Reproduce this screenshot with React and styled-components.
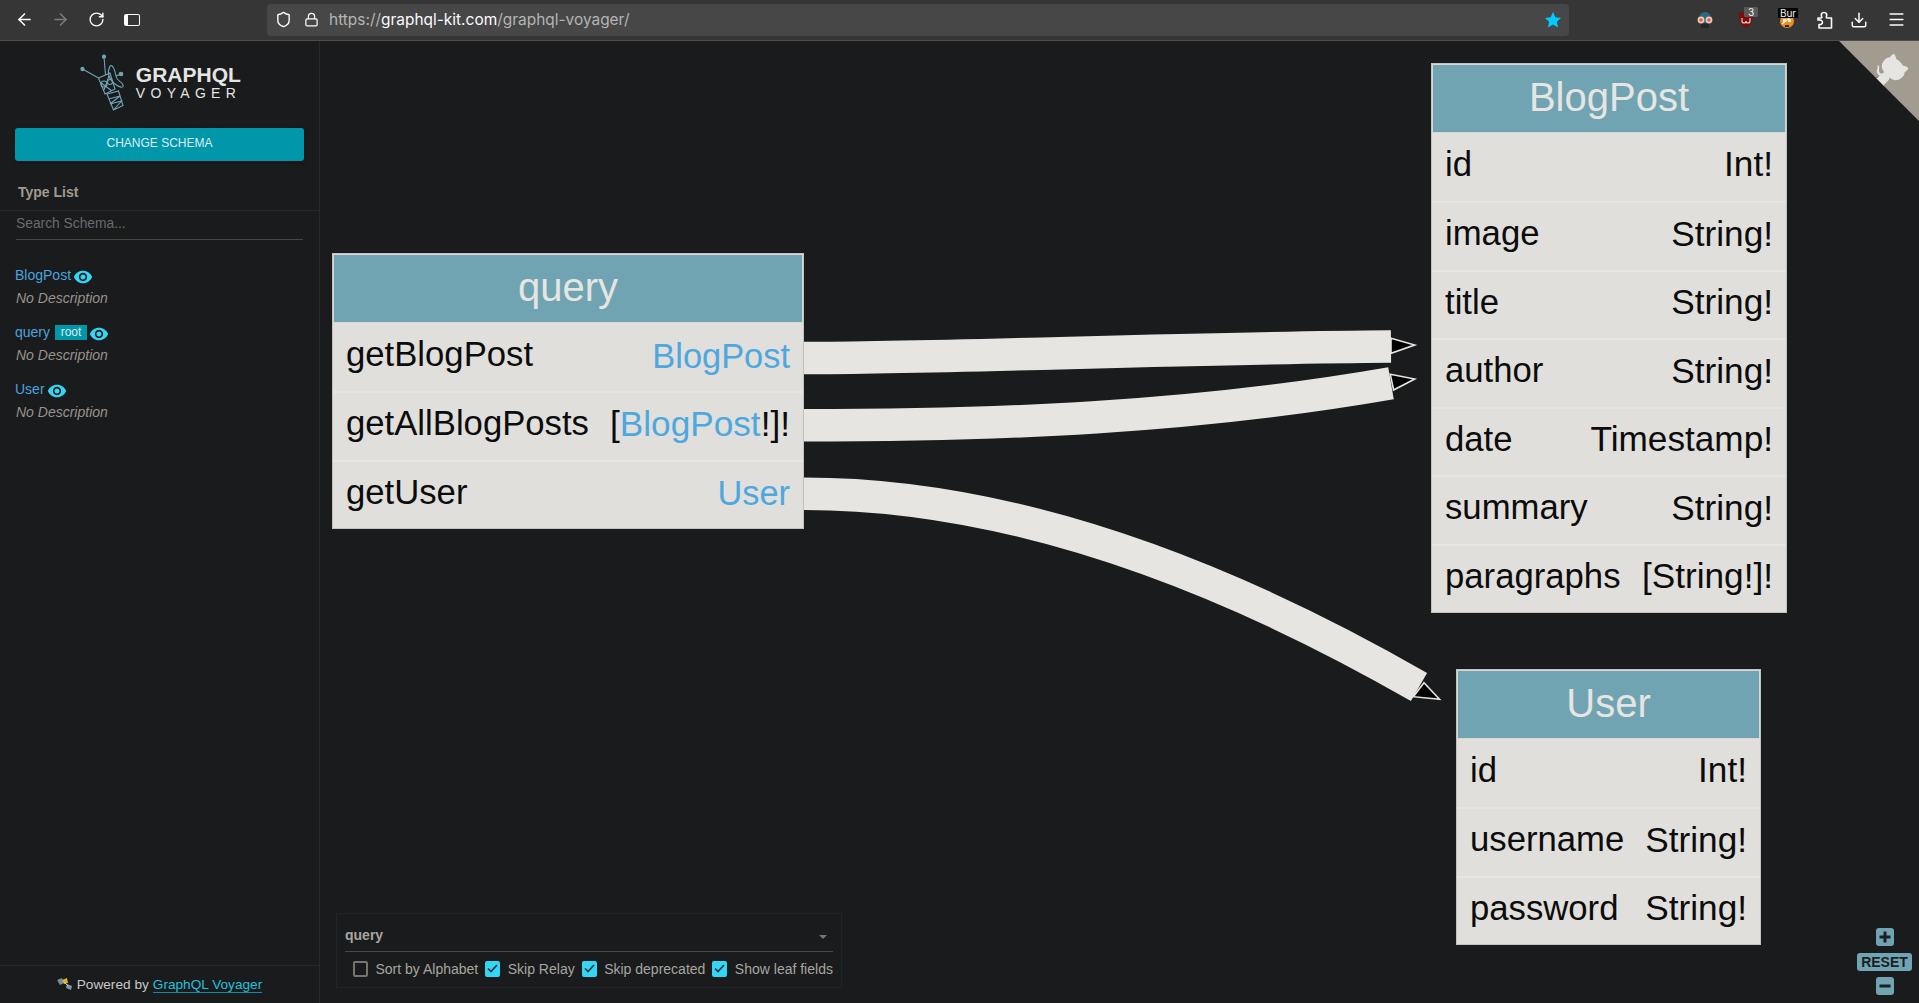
import React from "react";
import styled, { createGlobalStyle } from "styled-components";
import { ArrowLeft, ArrowRight, RotateCw, Shield, Lock, Download, Menu } from "lucide-react";

const Global = createGlobalStyle`
  html, body { margin: 0; height: 100%; background: #191b1d; }
  * { box-sizing: border-box; }
  body { font-family: "Liberation Sans", Arial, sans-serif; overflow: hidden; }
`;

const Page = styled.div`
  display: flex;
  flex-direction: column;
  width: 100vw;
  height: 100vh;
`;

// browser chrome
const TopBar = styled.div`
  flex: 0 0 41px;
  display: flex;
  align-items: center;
  background: #363636;
  border-bottom: 1px solid #4d4d4d;
  padding-bottom: 1px;
`;
const NavButtons = styled.div`
  flex: 0 0 267px;
  display: flex;
  align-items: center;
  gap: 16px;
  padding-left: 14px;
  color: #fbfbfe;
`;
const NavIcon = styled.span`
  display: flex;
  width: 20px;
  height: 20px;
  align-items: center;
  justify-content: center;
  color: ${p => (p.$off ? "#7c7c7c" : "#fbfbfe")};
`;
const SideToggle = styled.span`
  flex: 0 0 16px;
  height: 12px;
  border: 1.5px solid #fbfbfe;
  border-left-width: 4px;
  border-radius: 2px;
`;
const UrlBar = styled.div`
  flex: 0 0 1302px;
  height: 32px;
  display: flex;
  align-items: center;
  background: #474747;
  border-radius: 4px;
  padding: 0 7px 0 8px;
  color: #fbfbfe;
`;
const LockIcon = styled(Lock)`
  margin-left: 12px;
`;
const UrlText = styled.div`
  flex: 1;
  margin-left: 10px;
  font: 15.45px Inter, "Noto Sans", sans-serif;
  color: #b4b4b4;
  b { font-weight: 400; color: #fbfbfe; }
`;
const ExtIcons = styled.div`
  flex: 1;
  display: flex;
  align-items: center;
  padding-left: 115.5px;
  color: #fbfbfe;
`;
const Ext = styled.span`
  position: relative;
  flex: 0 0 ${p => p.$w}px;
  display: flex;
  height: 20px;
  align-items: center;
  justify-content: center;
`;
const Badge = styled.span`
  position: absolute;
  top: ${p => p.$top}px;
  left: ${p => p.$left}px;
  width: ${p => p.$w}px;
  height: 10px;
  background: ${p => p.$bg};
  color: #f4f4f4;
  border-radius: 1px;
  font: 10px/10px Inter, sans-serif;
  text-align: center;
  white-space: nowrap;
`;

// sidebar
const Main = styled.div`
  flex: 1;
  display: flex;
  min-height: 0;
`;
const Sidebar = styled.aside`
  flex: 0 0 320px;
  display: flex;
  flex-direction: column;
  border-right: 1px solid #26282a;
`;
const Logo = styled.div`
  height: 87px;
  display: flex;
  align-items: center;
  justify-content: center;
  gap: 8px;
  padding: 0 0 3px 2px;
`;
const LogoText = styled.div`
  display: flex;
  flex-direction: column;
  color: #e6e5e1;
  b { font-size: 21px; line-height: 20px; }
  span { font-size: 14px; line-height: 16px; letter-spacing: 5.3px; }
`;
const ChangeButton = styled.div`
  flex: 0 0 33px;
  margin: 0 15px;
  display: flex;
  align-items: center;
  justify-content: center;
  background: #0097ab;
  border-radius: 3px;
  color: #dfeef0;
  font-size: 12px;
  padding-bottom: 3px;
  box-shadow: 0 1px 3px rgba(0, 0, 0, 0.5);
`;
const TypeTitle = styled.div`
  height: 50px;
  padding: 23px 0 0 18px;
  border-bottom: 1px solid #26282a;
  color: #a09a90;
  font-size: 14px;
  font-weight: 700;
  line-height: 16px;
`;
const SearchBox = styled.div`
  height: 29px;
  margin: 0 16px;
  padding-top: 5px;
  border-bottom: 1px solid #47473f;
  color: #6b6b6b;
  font-size: 13.8px;
  line-height: 16px;
`;
const TypeItems = styled.div`
  padding: 24px 15px 0;
`;
const TypeItem = styled.div`
  height: 57px;
`;
const TypeName = styled.div`
  height: 22px;
  display: flex;
  align-items: center;
  gap: 4px;
  color: #4ba3dc;
  font-size: 14px;
`;
const RootTag = styled.span`
  height: 15px;
  width: 32px;
  margin-left: 1px;
  background: #0097ab;
  color: #dcecef;
  font-size: 12px;
  line-height: 14px;
  text-align: center;
`;
const EyeIcon = styled.svg`
  width: 20px;
  height: 20px;
  margin: 4px 0 0 -2px;
  fill: #33d7f5;
`;
const TypeDesc = styled.div`
  height: 23px;
  padding: 1px 0 0 1px;
  color: #99938a;
  font-size: 14px;
  font-style: italic;
  line-height: 23px;
`;
const Powered = styled.div`
  margin-top: auto;
  flex: 0 0 38px;
  display: flex;
  align-items: center;
  justify-content: center;
  gap: 4px;
  border-top: 1px solid #26282a;
  color: #c9c9c7;
  font-size: 13.65px;
  a {
    color: #22c1dc;
    text-decoration: none;
    border-bottom: 1px solid #128aa0;
    line-height: 15px;
  }
`;

// graph canvas
const Canvas = styled.main`
  position: relative;
  flex: 1;
  overflow: hidden;
`;
const Edges = styled.svg`
  position: absolute;
  left: 0;
  top: 0;
  width: 100%;
  height: 100%;
`;
const Node = styled.div`
  position: absolute;
  left: ${p => p.$x}px;
  top: ${p => p.$y}px;
  width: ${p => p.$w}px;
  background: #e0dfdb;
  border: 1px solid #c3c2be;
  color: #0c0c0c;
`;
const NodeTitle = styled.div`
  height: 68.5px;
  display: flex;
  align-items: center;
  justify-content: center;
  padding-bottom: 2px;
  background: #70a4b2;
  border: 1px solid #d7d8d4;
  color: #e6e5e1;
  font-size: 40px;
`;
const Field = styled.div`
  height: 68.5px;
  display: flex;
  align-items: center;
  justify-content: space-between;
  padding: 0 13px 5.5px;
  font-size: 34.7px;
  white-space: nowrap;
  & + & { border-top: 2px solid #e6e5e1; }
`;
const FieldType = styled.span`
  font-size: ${p => (p.$link ? "34.4px" : "35.2px")};
  transform: translateY(${p => p.$drop || 0}px);
`;
const TypeLink = styled.span`
  color: #4ea8df;
`;

const Corner = styled.svg`
  position: absolute;
  top: 0;
  right: 0;
  width: 80px;
  height: 80px;
`;

// settings panel at the bottom of the graph
const Settings = styled.div`
  position: absolute;
  left: 16px;
  bottom: 15px;
  width: 506px;
  height: 75px;
  padding: 0 8px;
  border: 1px solid #222527;
  background: #191b1d;
`;
const SchemaSelect = styled.div`
  height: 38px;
  display: flex;
  align-items: center;
  justify-content: space-between;
  padding: 5px 6px 0 0;
  border-bottom: 1px solid #4a4841;
  color: #a8a59f;
  font-size: 14px;
  font-weight: 700;
`;
const Caret = styled.span`
  width: 0;
  height: 0;
  margin-top: 3px;
  border-left: 4.5px solid transparent;
  border-right: 4.5px solid transparent;
  border-top: 4.5px solid #77746e;
`;
const Checks = styled.div`
  height: 33px;
  display: flex;
  align-items: center;
  gap: 7px;
  padding-left: 8px;
`;
const Check = styled.label`
  display: flex;
  align-items: center;
  gap: 7.5px;
  color: #a8a59f;
  font-size: 14px;
  white-space: nowrap;
`;
const Box = styled.span`
  display: flex;
  width: 15px;
  height: 16px;
  align-items: center;
  justify-content: center;
  border-radius: 2px;
  background: ${p => (p.$on ? "#33d7f5" : "transparent")};
  border: ${p => (p.$on ? "none" : "2px solid #77746e")};
`;

const ZoomControls = styled.div`
  position: absolute;
  right: 7px;
  bottom: 8px;
  width: 55px;
  display: flex;
  flex-direction: column;
  align-items: center;
  gap: 6.5px;
`;
const ZoomButton = styled.div`
  width: ${p => (p.$wide ? "55px" : "18px")};
  height: 18px;
  display: flex;
  align-items: center;
  justify-content: center;
  border-radius: 3px;
  background: #70a4b2;
  color: #1b1e22;
  font-size: 14px;
  font-weight: 700;
`;

const Eye = () => (
  <EyeIcon viewBox="0 0 24 24">
    <path d="M12 4.5C7 4.5 2.73 7.61 1 12c1.73 4.39 6 7.5 11 7.5s9.27-3.11 11-7.5c-1.73-4.39-6-7.5-11-7.5zM12 17c-2.76 0-5-2.24-5-5s2.24-5 5-5 5 2.24 5 5-2.24 5-5 5zm0-8c-1.66 0-3 1.34-3 3s1.34 3 3 3 3-1.34 3-3-1.34-3-3-3z" />
  </EyeIcon>
);

const Satellite = () => (
  <svg width="48" height="58" viewBox="0 0 48 58" fill="none" stroke="#70a4b2" strokeWidth="1.1">
    <circle cx="2.5" cy="15" r="1.6" fill="#70a4b2" />
    <circle cx="24" cy="2.7" r="1.6" fill="#70a4b2" />
    <circle cx="41" cy="20" r="1.8" fill="#70a4b2" />
    <path d="M2.5 15 18.5 24M24 2.7 25.5 21" />
    <path d="M30 12C26 20 30 26 35 30 39 33 44 35 43 31 42 27 37 28 36 22 35 17 33 10 30 12ZM36 22 41 20" />
    <path d="M18.5 24 30 19 35 35 25 40ZM20 28 32 37M29 22 24 36" />
    <circle cx="24" cy="30" r="3" />
    <circle cx="30" cy="28" r="2.5" />
    <path d="M27 40 38.5 37 43 51.5 33.500 56ZM28.500 45 40 42 30 50 41.500 47 33.500 56" />
  </svg>
);

const SmallSatellite = () => (
  <svg width="16" height="13" viewBox="0 0 16 13">
    <path d="M0 2 5 0 7 5 3 7Z" fill="#6f8f9c" />
    <path d="M5 2 10 0 11 5 7 6Z" fill="#e0b02c" />
    <path d="M10 6 15 8 14 12 9 10Z" fill="#7d99a5" />
    <path d="M7 4 11 8" stroke="#c8c8c8" fill="none" />
  </svg>
);

const GlassesGuy = () => (
  <svg width="18" height="18" viewBox="0 0 18 18">
    <path d="M3 9C3 4 5 1 9 1s6 3 6 8v3H3Z" fill="#2d6a7d" />
    <path d="M5 13h8v4H5Z" fill="#22252a" />
    <circle cx="5" cy="9" r="3.4" fill="#f0c9b8" />
    <circle cx="13" cy="9" r="3.4" fill="#f0c9b8" />
    <circle cx="5" cy="9" r="1.8" fill="#d8604f" />
    <circle cx="13" cy="9" r="1.8" fill="#d8604f" />
  </svg>
);

const Shieldo = () => (
  <svg width="16" height="19" viewBox="0 0 16 19">
    <path d="M1 3 8 1l7 2c0 7-1 12-7 15C2 15 1 10 1 3Z" fill="#7d0d0d" />
    <path d="M4 8v3a2 2 0 0 0 4 0 2 2 0 0 0 4 0V8" fill="none" stroke="#e9cfcf" strokeWidth="1.2" />
  </svg>
);

const Tiger = () => (
  <svg width="16" height="16" viewBox="0 0 16 16">
    <circle cx="8" cy="9" r="7" fill="#ef8c1c" />
    <path d="M4 7h3v3H4ZM9 7h3v3H9Z" fill="#f6f0e4" />
    <path d="M3 12 8 8l5-5" stroke="#f6f0e4" strokeWidth="1.4" fill="none" />
    <path d="M6 13h4v2H6Z" fill="#2a2018" />
  </svg>
);

const Puzzle = () => (
  <svg width="20" height="20" viewBox="0 0 20 20" fill="none" stroke="currentColor" strokeWidth="1.6" strokeLinejoin="round">
    <path d="M3 8h3c1 0 1-1 .6-1.700C6 5 6.200 2.500 9 2.500S12 5 11.500 6.300C11 7 11.500 8 12 8h4.500v10H4v-3.500c1.500.5 3.500-.3 3.500-2.200S5 9.500 3 10Z" />
  </svg>
);

const Tick = () => (
  <svg width="11" height="9" viewBox="0 0 11 9" fill="none" stroke="#17333b" strokeWidth="1.7">
    <path d="M1 4.500 4 7.500 10 1" />
  </svg>
);

const fieldsQuery = [
  { name: "getBlogPost", type: <TypeLink>BlogPost</TypeLink>, link: true, drop: 1.5 },
  { name: "getAllBlogPosts", type: <>[<TypeLink>BlogPost</TypeLink>!]!</> },
  { name: "getUser", type: <TypeLink>User</TypeLink>, link: true, drop: 1 }
];
const fieldsBlog = [
  { name: "id", type: "Int!" },
  { name: "image", type: "String!" },
  { name: "title", type: "String!" },
  { name: "author", type: "String!" },
  { name: "date", type: "Timestamp!" },
  { name: "summary", type: "String!" },
  { name: "paragraphs", type: "[String!]!" }
];
const fieldsUser = [
  { name: "id", type: "Int!" },
  { name: "username", type: "String!" },
  { name: "password", type: "String!" }
];

const nodes = [
  { title: "query", x: 12, y: 212, w: 472, fields: fieldsQuery },
  { title: "BlogPost", x: 1111, y: 22, w: 356, fields: fieldsBlog },
  { title: "User", x: 1136, y: 628, w: 305, fields: fieldsUser }
];

const types = [
  { name: "BlogPost" },
  { name: "query", root: true },
  { name: "User" }
];

const checks = [
  { label: "Sort by Alphabet" },
  { label: "Skip Relay", on: true },
  { label: "Skip deprecated", on: true },
  { label: "Show leaf fields", on: true }
];

const App = () => (
  <Page>
    <Global />
    <TopBar>
      <NavButtons>
        <NavIcon><ArrowLeft size={19} /></NavIcon>
        <NavIcon $off><ArrowRight size={19} /></NavIcon>
        <NavIcon><RotateCw size={17} /></NavIcon>
        <NavIcon><SideToggle /></NavIcon>
      </NavButtons>
      <UrlBar>
        <Shield size={17} />
        <LockIcon size={15} />
        <UrlText>https://<b>graphql-kit.com</b>/graphql-voyager/</UrlText>
        <svg width="18" height="18" viewBox="0 0 18 18">
          <path d="M9 1l2.400 5.200 5.600.7-4.100 3.900 1.100 5.600L9 13.600l-5 2.800 1.100-5.600L1 6.900l5.600-.7Z" fill="#00ccff" />
        </svg>
      </UrlBar>
      <ExtIcons>
        <Ext $w={41}><GlassesGuy /></Ext>
        <Ext $w={41}><Shieldo /><Badge $top={-3} $left={18.5} $w={14} $bg="#5a5a5a">3</Badge></Ext>
        <Ext $w={41}><Tiger /><Badge $top={-2} $left={11.5} $w={20} $bg="#000">Bur</Badge></Ext>
        <Ext $w={35}><Puzzle /></Ext>
        <Ext $w={33}><Download size={18} /></Ext>
        <Ext $w={41}><Menu size={19} /></Ext>
      </ExtIcons>
    </TopBar>
    <Main>
      <Sidebar>
        <Logo>
          <Satellite />
          <LogoText>
            <b>GRAPHQL</b>
            <span>VOYAGER</span>
          </LogoText>
        </Logo>
        <ChangeButton>CHANGE SCHEMA</ChangeButton>
        <TypeTitle>Type List</TypeTitle>
        <SearchBox>Search Schema...</SearchBox>
        <TypeItems>
          {types.map(t => (
            <TypeItem key={t.name}>
              <TypeName>
                {t.name}
                {t.root && <RootTag>root</RootTag>}
                <Eye />
              </TypeName>
              <TypeDesc>No Description</TypeDesc>
            </TypeItem>
          ))}
        </TypeItems>
        <Powered>
          <SmallSatellite />
          <span>Powered by</span>
          <a href="#voyager">GraphQL Voyager</a>
        </Powered>
      </Sidebar>
      <Canvas>
        <Edges>
          <g fill="#000" stroke="#e6e5e1" strokeWidth="1.6">
            <path d="M1071 297.300 1094.700 304 1071 312.300Z" />
            <path d="M1070.300 333.300 1094.700 338 1073.600 349Z" />
            <path d="M1104 641.700 1119.500 658.300 1093.400 655.700Z" />
          </g>
          <g fill="none" stroke="#e6e5e1" strokeWidth="32.500">
            <path d="M484 317 C630 317 860 307 1071 305.500" />
            <path d="M484 384.300 C680 384.300 871 377 1071 342.300" />
            <path d="M484 452.700 C690 452.700 899 531 1099 646" />
          </g>
        </Edges>
        {nodes.map(n => (
          <Node key={n.title} $x={n.x} $y={n.y} $w={n.w}>
            <NodeTitle>{n.title}</NodeTitle>
            {n.fields.map(f => (
              <Field key={f.name}>
                <span>{f.name}</span>
                <FieldType $link={f.link} $drop={f.drop}>{f.type}</FieldType>
              </Field>
            ))}
          </Node>
        ))}
        <Corner viewBox="0 0 250 250">
          <path d="M0,0 L115,115 L130,115 L142,142 L250,250 L250,0 Z" fill="#a29b90" />
          <path d="M128.3,109.0 C113.8,99.7 119.0,89.6 119.0,89.6 C122.0,82.7 120.5,78.6 120.5,78.6 C119.2,72.0 123.4,76.3 123.4,76.3 C127.3,80.9 125.5,87.3 125.5,87.3 C122.9,97.6 130.6,101.9 134.4,103.2" fill="#e6e5e1" />
          <path d="M115.0,115.0 C114.9,115.1 118.7,116.5 119.8,115.4 L133.7,101.6 C136.9,99.2 139.9,98.4 142.2,98.6 C133.8,88.0 127.5,74.4 143.8,58.0 C148.5,53.4 154.0,51.2 159.7,51.0 C160.3,49.4 163.2,43.6 171.4,40.1 C171.4,40.1 176.1,42.5 178.8,56.2 C183.1,58.6 187.2,61.8 190.9,65.4 C194.5,69.0 197.7,73.2 200.1,77.6 C213.8,80.2 216.3,84.9 216.3,84.9 C212.7,93.1 206.9,96.0 205.4,96.6 C205.1,102.4 203.0,107.8 198.3,112.5 C181.9,128.9 168.3,122.5 157.7,114.1 C157.9,116.9 156.7,120.9 152.7,124.9 L141.0,136.5 C139.8,137.7 141.6,141.9 141.8,141.8 Z" fill="#e6e5e1" />
        </Corner>
        <Settings>
          <SchemaSelect>
            <span>query</span>
            <Caret />
          </SchemaSelect>
          <Checks>
            {checks.map(c => (
              <Check key={c.label}>
                <Box $on={c.on}>{c.on && <Tick />}</Box>
                {c.label}
              </Check>
            ))}
          </Checks>
        </Settings>
        <ZoomControls>
          <ZoomButton>
            <svg width="14" height="14" viewBox="0 0 14 14"><path d="M7 1.500v11M1.500 7h11" stroke="#1b1e22" strokeWidth="3" /></svg>
          </ZoomButton>
          <ZoomButton $wide>RESET</ZoomButton>
          <ZoomButton>
            <svg width="14" height="14" viewBox="0 0 14 14"><path d="M1.500 7h11" stroke="#1b1e22" strokeWidth="3" /></svg>
          </ZoomButton>
        </ZoomControls>
      </Canvas>
    </Main>
  </Page>
);

export default App;
